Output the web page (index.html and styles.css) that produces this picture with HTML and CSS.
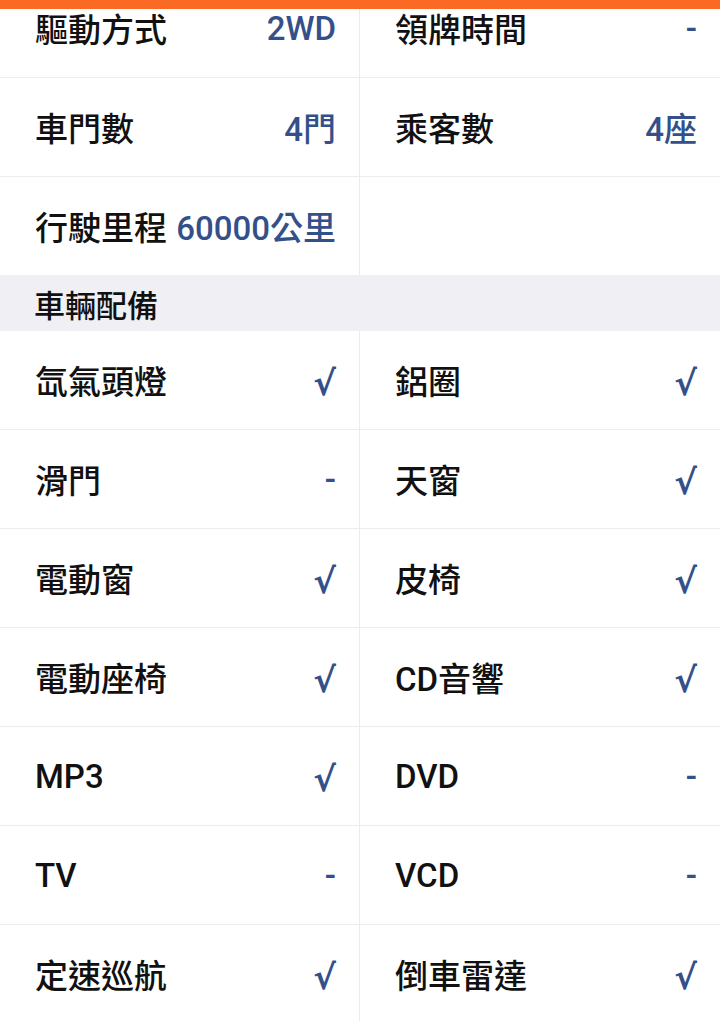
FILE: index.html
```html
<!DOCTYPE html>
<html lang="zh-Hant">
<head>
<meta charset="utf-8">
<link rel="stylesheet" href="styles.css">
</head>
<body>
<div class="topbar"></div>
<main class="page">
  <section class="grid">
    <div class="cell"><span class="label">驅動方式</span><span class="value">2WD</span></div>
    <div class="cell"><span class="label">領牌時間</span><span class="value">-</span></div>
    <div class="cell"><span class="label">車門數</span><span class="value">4門</span></div>
    <div class="cell"><span class="label">乘客數</span><span class="value">4座</span></div>
    <div class="cell last"><span class="label">行駛里程</span><span class="value">60000公里</span></div>
    <div class="cell last"></div>
  </section>
  <h2 class="section-title">車輛配備</h2>
  <section class="grid">
    <div class="cell"><span class="label">氙氣頭燈</span><span class="value check">√</span></div>
    <div class="cell"><span class="label">鋁圈</span><span class="value check">√</span></div>
    <div class="cell"><span class="label">滑門</span><span class="value">-</span></div>
    <div class="cell"><span class="label">天窗</span><span class="value check">√</span></div>
    <div class="cell"><span class="label">電動窗</span><span class="value check">√</span></div>
    <div class="cell"><span class="label">皮椅</span><span class="value check">√</span></div>
    <div class="cell"><span class="label">電動座椅</span><span class="value check">√</span></div>
    <div class="cell"><span class="label">CD音響</span><span class="value check">√</span></div>
    <div class="cell"><span class="label">MP3</span><span class="value check">√</span></div>
    <div class="cell"><span class="label">DVD</span><span class="value">-</span></div>
    <div class="cell"><span class="label">TV</span><span class="value">-</span></div>
    <div class="cell"><span class="label">VCD</span><span class="value">-</span></div>
    <div class="cell"><span class="label">定速巡航</span><span class="value check">√</span></div>
    <div class="cell"><span class="label">倒車雷達</span><span class="value check">√</span></div>
  </section>
</main>
</body>
</html>
```

FILE: styles.css
```css
html, body {
  margin: 0;
  padding: 0;
  background: #ffffff;
  overflow: hidden;
}
body {
  font-family: Roboto, "Noto Sans CJK TC", sans-serif;
  color: #111111;
}
.topbar {
  position: fixed;
  top: 0;
  left: 0;
  right: 0;
  height: 9px;
  background: #fa6a24;
  z-index: 10;
}
.page {
  margin-top: -21px;
}
.grid {
  display: grid;
  grid-template-columns: 360px 360px;
}
.cell {
  height: 98px;
  border-bottom: 1px solid #ececf0;
  display: flex;
  align-items: center;
  justify-content: space-between;
  padding: 0 23px 0 35px;
  box-sizing: content-box;
}
.cell:nth-child(odd) {
  width: 301px;
  border-right: 1px solid #ececf0;
}
.cell:nth-child(even) {
  width: 302px;
  padding-right: 23px;
}
.cell.last {
  border-bottom: none;
}
.label {
  font-size: 33px;
  font-weight: 500;
  white-space: nowrap;
}
.value {
  font-size: 33px;
  font-weight: 500;
  color: #34508a;
  white-space: nowrap;
}
.check {
  font-family: "DejaVu Sans", sans-serif;
  font-size: 34px;
  font-weight: 700;
  position: relative;
  top: 3px;
}
.section-title {
  margin: 0;
  height: 56px;
  background: #efeff4;
  display: flex;
  align-items: center;
  padding-left: 34px;
  font-size: 31px;
  font-weight: 500;
}
```
